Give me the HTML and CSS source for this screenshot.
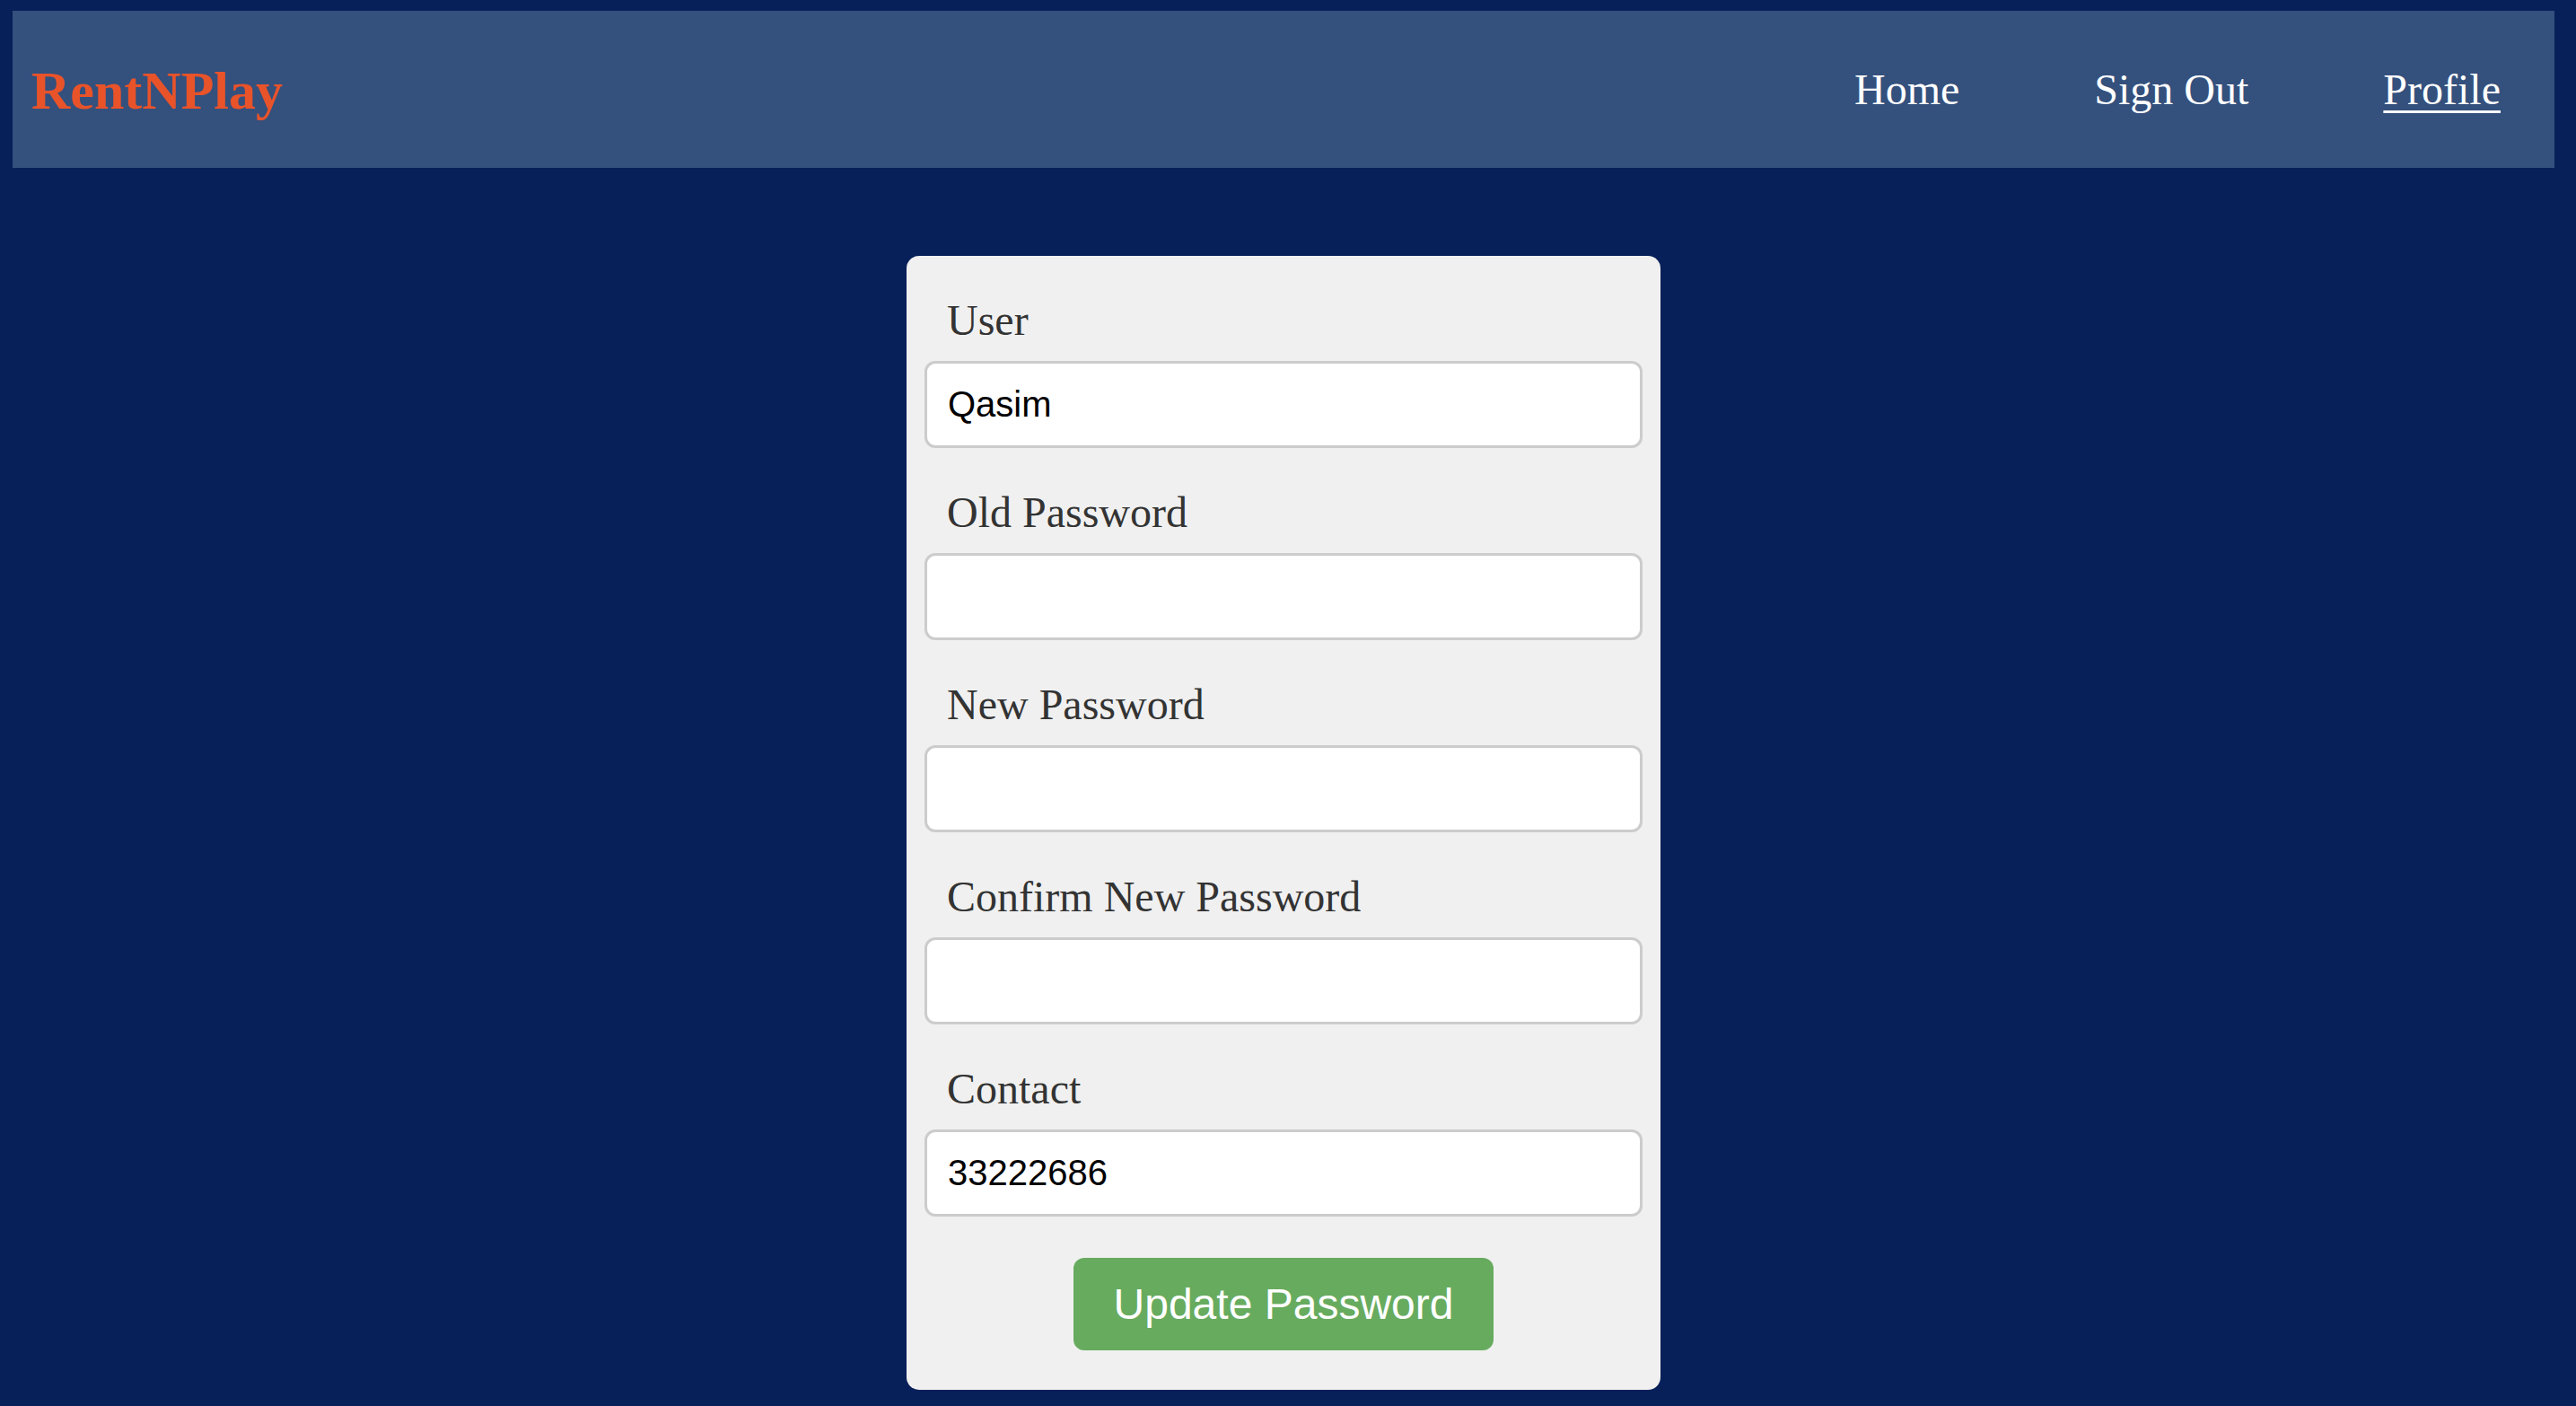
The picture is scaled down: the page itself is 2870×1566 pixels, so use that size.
FILE: index.html
```html
<!DOCTYPE html>
<html lang="en">
<head>
<meta charset="utf-8">
<title>RentNPlay - Profile</title>
<link rel="stylesheet" href="styles.css">
</head>
<body>
<header class="topbar">
  <a class="logo" href="#">RentNPlay</a>
  <nav class="nav">
    <a class="nav-link" href="#">Home</a>
    <a class="nav-link" href="#">Sign Out</a>
    <a class="nav-link active" href="#">Profile</a>
  </nav>
</header>
<main class="main">
  <form class="card">
    <div class="group">
      <label class="label">User</label>
      <input class="field" type="text" value="Qasim">
    </div>
    <div class="group">
      <label class="label">Old Password</label>
      <input class="field" type="password">
    </div>
    <div class="group">
      <label class="label">New Password</label>
      <input class="field" type="password">
    </div>
    <div class="group">
      <label class="label">Confirm New Password</label>
      <input class="field" type="password">
    </div>
    <div class="group">
      <label class="label">Contact</label>
      <input class="field" type="text" value="33222686">
    </div>
    <div class="actions">
      <button class="btn" type="button">Update Password</button>
    </div>
  </form>
</main>
</body>
</html>
```

FILE: styles.css
```css
html, body {
  margin: 0;
  padding: 0;
}
body {
  background: #082059;
  font-family: "Liberation Serif", "Times New Roman", serif;
  min-height: 1566px;
  padding: 12px 24px 0 14px;
  box-sizing: border-box;
}
.topbar {
  height: 175px;
  background: #34507d;
  display: flex;
  align-items: center;
  justify-content: space-between;
  padding: 0 60px 0 21px;
}
.logo {
  color: #e8532a;
  font-weight: bold;
  font-size: 60px;
  text-decoration: none;
  position: relative;
  top: 2px;
}
.nav {
  display: flex;
  gap: 150px;
}
.nav-link {
  color: #ffffff;
  font-size: 48px;
  text-decoration: none;
}
.nav-link.active {
  text-decoration: underline;
  text-decoration-thickness: 3px;
  text-underline-offset: 7px;
}
.main {
  display: flex;
  justify-content: center;
  padding-top: 98px;
}
.card {
  width: 840px;
  box-sizing: border-box;
  background: #f0f0f0;
  border-radius: 14px;
  padding: 20px 20px 44px;
}
.group {
  margin-bottom: 20px;
}
.label {
  display: block;
  color: #333333;
  font-size: 48px;
  line-height: 55px;
  padding: 24px 0 0 25px;
  margin-bottom: 18px;
}
.field {
  display: block;
  width: 100%;
  height: 97px;
  box-sizing: border-box;
  border: 3px solid #cccccc;
  border-radius: 12px;
  background: #ffffff;
  padding: 0 23px;
  font-family: "Liberation Sans", Arial, sans-serif;
  font-size: 40px;
  color: #000000;
  outline: none;
}
.actions {
  display: flex;
  justify-content: center;
  padding-top: 26px;
}
.btn {
  height: 103px;
  padding: 0 45px;
  background: #67ab5f;
  color: #ffffff;
  border: none;
  border-radius: 12px;
  font-family: "Liberation Sans", Arial, sans-serif;
  font-size: 48px;
}
```
